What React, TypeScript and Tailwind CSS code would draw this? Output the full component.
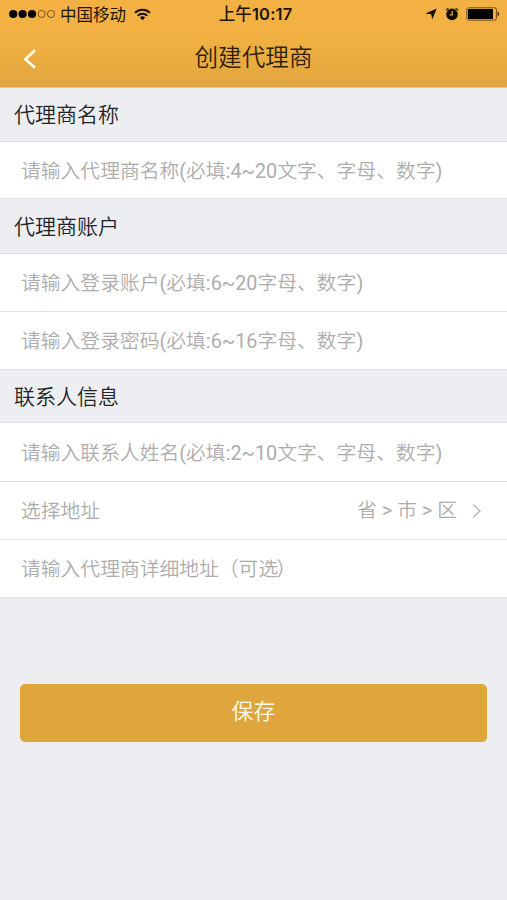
import type { ReactNode } from "react";

function SectionTitle({ className, children }: { className: string; children: ReactNode }) {
  return (
    <h2 className={`flex items-center border-b border-[#dcdde0] pl-[14px] text-[21px] leading-none font-[350] text-[#242428] ${className}`}>
      {children}
    </h2>
  );
}

function Row({ className = "h-[58px]", children }: { className?: string; children: ReactNode }) {
  return (
    <div className={`flex items-center justify-between border-b border-[#dedfe1] bg-white pt-[3px] pl-[21px] pr-[25px] text-[19.8px] leading-none font-[350] whitespace-nowrap text-[#adadad] ${className}`}>
      {children}
    </div>
  );
}

/* Placeholder text; Latin runs use the regular weight so digits keep the same density as the characters. */
function Hint({ children }: { children: string }) {
  const parts = children.split(/([\x20-\x7e]+)/);
  return (
    <span>
      {parts.map((part, i) =>
        i % 2 === 1 ? (
          <span key={i} className="font-normal">{part}</span>
        ) : (
          part
        ),
      )}
    </span>
  );
}

function StatusBar() {
  return (
    <div className="grid h-[28px] grid-cols-3 items-center pr-[7px] pl-[9px] text-[#1d1403]">
      <div className="flex items-center">
        <svg width="47" height="10" viewBox="0 0 47 10">
          <circle cx="4.2" cy="5" r="4.1" fill="#000" />
          <circle cx="13.6" cy="5" r="4.1" fill="#000" />
          <circle cx="23" cy="5" r="4.1" fill="#000" />
          <circle cx="32.6" cy="5" r="3.6" fill="none" stroke="#7b5715" strokeWidth="1" />
          <circle cx="42" cy="5" r="3.6" fill="none" stroke="#7b5715" strokeWidth="1" />
        </svg>
        <span className="ml-[4px] pt-[4px] text-[16.5px] leading-none whitespace-nowrap">中国移动</span>
        <svg className="ml-[8px]" width="17" height="13" viewBox="0 0 17 13" fill="none" stroke="#150e00" strokeWidth="2">
          <path d="M1 4.8a10.7 10.7 0 0 1 15 0" />
          <path d="M3.7 7.6a6.9 6.9 0 0 1 9.6 0" />
          <path d="M8.5 12.2 5.8 9.6a3.8 3.8 0 0 1 5.4 0z" fill="#150e00" stroke="none" />
        </svg>
      </div>
      <div className="pt-[1px] pl-[2px] text-center font-['Inter','Noto_Sans_CJK_SC',sans-serif] text-[16.5px] leading-none font-medium tracking-[0.15px] whitespace-nowrap">
        上午<span className="font-semibold">10:17</span>
      </div>
      <div className="flex items-center justify-end">
        <svg width="12" height="12" viewBox="0 0 12 12" fill="#150e00">
          <path d="M11.7.4 7.3 11.6 6.2 6.3.4 5.6z" />
        </svg>
        <svg className="ml-[8px]" width="14" height="14" viewBox="0 0 14 14">
          <circle cx="7" cy="7.4" r="5.8" fill="#150e00" />
          <path d="M.8 3.3 3.5 1M13.2 3.3 10.5 1" stroke="#4a3208" strokeWidth="1.4" />
          <path d="M7.2 4v3.8H4.8" fill="none" stroke="#e9ad43" strokeWidth="1.2" />
        </svg>
        <svg className="ml-[7px]" width="34" height="14" viewBox="0 0 34 14">
          <rect x=".8" y=".8" width="29.6" height="12.4" rx="1.8" fill="none" stroke="#70500f" strokeWidth="1" />
          <rect x="2" y="2" width="25" height="10" rx=".6" fill="#000" />
          <path d="M31.5 4.5c2 .8 2 4.2 0 5z" fill="#3a2604" />
        </svg>
      </div>
    </div>
  );
}

export default function App() {
  return (
    <main className="flex h-[900px] w-[507px] flex-col overflow-hidden bg-[#edeef2] font-['Roboto','Noto_Sans_CJK_SC',sans-serif]">
      <header className="h-[88px] shrink-0 border-b border-[#dccba8] bg-linear-to-b from-[#f2b142] from-40% to-[#e0a63e]">
        <StatusBar />
        <div className="grid h-[58px] grid-cols-[1fr_auto_1fr] items-center">
          <button aria-label="返回" className="pt-[4px] pl-[23px]">
            <svg width="14" height="20" viewBox="0 0 14 20" fill="none" stroke="#fffbe8" strokeWidth="2.8">
              <path d="M12 1.2 2.4 10.3 12 18.8" />
            </svg>
          </button>
          <h1 className="pt-[3px] text-[23.6px] leading-none font-[350] text-[#2f1f06]">创建代理商</h1>
        </div>
      </header>

      <SectionTitle className="h-[54px] pt-[2px]">代理商名称</SectionTitle>
      <Row className="h-[57px]">
        <Hint>请输入代理商名称(必填:4~20文字、字母、数字)</Hint>
      </Row>

      <SectionTitle className="h-[55px] pt-[2px]">代理商账户</SectionTitle>
      <Row>
        <Hint>请输入登录账户(必填:6~20字母、数字)</Hint>
      </Row>
      <Row>
        <Hint>请输入登录密码(必填:6~16字母、数字)</Hint>
      </Row>

      <SectionTitle className="h-[53px] pt-[2px]">联系人信息</SectionTitle>
      <Row className="h-[59px]">
        <Hint>请输入联系人姓名(必填:2~10文字、字母、数字)</Hint>
      </Row>
      <Row>
        <span>选择地址</span>
        <span className="-mt-[3px] flex items-center">
          <Hint>省 &gt; 市 &gt; 区</Hint>
          <svg className="mt-[2px] ml-[15px]" width="10" height="14" viewBox="0 0 10 14" fill="none" stroke="#b8b8b8" strokeWidth="1.4">
            <path d="M1.2.8 8 7 1.2 13.2" />
          </svg>
        </span>
      </Row>
      <Row>
        <span>
          请输入代理商详细地址（可<span className="tracking-[-2px]">选</span>）
        </span>
      </Row>

      <button className="mx-[20px] mt-[85.5px] h-[58px] shrink-0 rounded-[5px] bg-[#e0a63e] pb-[1px] text-[22px] leading-none font-[350] text-[#fffaea]">
        保存
      </button>
    </main>
  );
}
